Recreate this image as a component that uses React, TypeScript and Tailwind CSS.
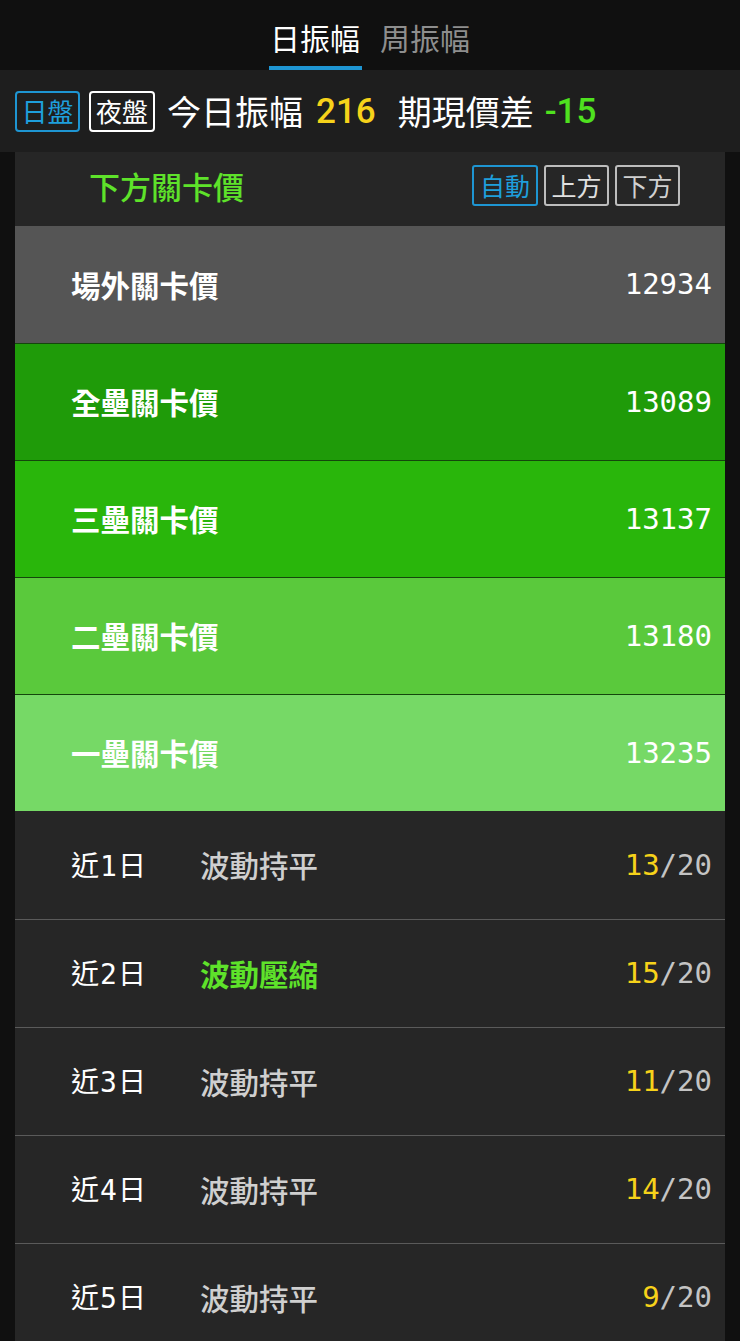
import React from 'react';

const CJK = "font-['Noto_Sans_CJK_TC','Noto_Sans',sans-serif]";
const MONO = "font-['DejaVu_Sans_Mono','Liberation_Mono',monospace]";

const levels = [
    { name: '場外關卡價', value: '12934', bg: 'bg-[#555555]' },
    { name: '全壘關卡價', value: '13089', bg: 'bg-[#1f9b09]' },
    { name: '三壘關卡價', value: '13137', bg: 'bg-[#29b60b]' },
    { name: '二壘關卡價', value: '13180', bg: 'bg-[#5ac93c]' },
    { name: '一壘關卡價', value: '13235', bg: 'bg-[#76d966]' },
];

const history = [
    { day: '1', status: '波動持平', hot: false, score: '13' },
    { day: '2', status: '波動壓縮', hot: true, score: '15' },
    { day: '3', status: '波動持平', hot: false, score: '11' },
    { day: '4', status: '波動持平', hot: false, score: '14' },
    { day: '5', status: '波動持平', hot: false, score: '9' },
];

const App: React.FC = () => {
    return (
        <div className={`w-[740px] min-h-screen bg-[#101010] ${CJK}`}>
            {/* tabs */}
            <div className="h-[70px] flex justify-center items-end gap-[17px]">
                <div className="flex flex-col items-center w-[93px]">
                    <span className="text-[30px] leading-none text-white pb-[14px]">日振幅</span>
                    <div className="h-[4px] w-full bg-[#1e95d2]" />
                </div>
                <div className="flex flex-col items-center w-[93px]">
                    <span className="text-[30px] leading-none text-[#8e8e8e] pb-[18px]">周振幅</span>
                </div>
            </div>

            {/* summary bar */}
            <div className="h-[82px] bg-[#1e1e1e] flex items-center pl-[15px]">
                <span className="h-[41px] w-[65px] flex items-center justify-center border-2 border-[#1e95d2] rounded-[4px] text-[#1e9fdc] text-[26px] leading-none">日盤</span>
                <span className="ml-[9px] h-[41px] w-[66px] flex items-center justify-center border-2 border-white rounded-[4px] text-white text-[26px] leading-none">夜盤</span>
                <span className="ml-[12px] text-[34px] text-white leading-none">今日振幅</span>
                <span className="ml-[13px] text-[35px] text-[#f6d21a] font-['Roboto',sans-serif] font-medium leading-none">216</span>
                <span className="ml-[22px] text-[34px] text-white leading-none">期現價差</span>
                <span className="ml-[11px] text-[35px] text-[#4fe11f] font-['Roboto',sans-serif] font-medium leading-none">-15</span>
            </div>

            {/* panel */}
            <div className="mx-[15px] bg-[#262626]">
                <div className="h-[74px] flex items-center justify-between pl-[74px] pr-[45px] pb-[8px]">
                    <span className="text-[31px] font-medium text-[#5ee22a] leading-none">下方關卡價</span>
                    <div className="flex gap-[6px]">
                        <span className="w-[66px] h-[41px] flex items-center justify-center border-2 border-[#1e95d2] rounded-[3px] text-[#1e9fdc] text-[25px] leading-none">自動</span>
                        <span className="w-[65px] h-[41px] flex items-center justify-center border-2 border-[#bdbdbd] rounded-[3px] text-[#e0e0e0] text-[25px] leading-none">上方</span>
                        <span className="w-[65px] h-[41px] flex items-center justify-center border-2 border-[#bdbdbd] rounded-[3px] text-[#d0d0d0] text-[25px] leading-none">下方</span>
                    </div>
                </div>

                {levels.map((l, i) => (
                    <div
                        key={l.name}
                        className={`h-[117px] flex items-center justify-between pl-[56px] pr-[13px] ${l.bg} ${i > 0 ? 'border-t border-[#14460c]' : ''}`}
                    >
                        <span className="text-[29.5px] font-bold text-white leading-none">{l.name}</span>
                        <span className={`${MONO} text-[29px] text-white leading-none`}>{l.value}</span>
                    </div>
                ))}

                {history.map((h, i) => (
                    <div
                        key={h.day}
                        className={`h-[108px] flex items-center pl-[56px] pr-[13px] ${i > 0 ? 'border-t border-[#5a5a5a]' : ''}`}
                    >
                        <span className="text-[28px] text-white leading-none">
                            近<span className={`${MONO} text-[28px] mx-[1px]`}>{h.day}</span>日
                        </span>
                        <span className={`ml-[54px] text-[29.5px] leading-none ${h.hot ? 'text-[#5ee22a] font-bold' : 'text-[#cfcfcf] font-medium'}`}>
                            {h.status}
                        </span>
                        <span className={`ml-auto ${MONO} text-[29px] leading-none`}>
                            <span className="text-[#f6d21a]">{h.score}</span>
                            <span className="text-[#c4c4c4]">/20</span>
                        </span>
                    </div>
                ))}
            </div>
        </div>
    );
};

export default App;
